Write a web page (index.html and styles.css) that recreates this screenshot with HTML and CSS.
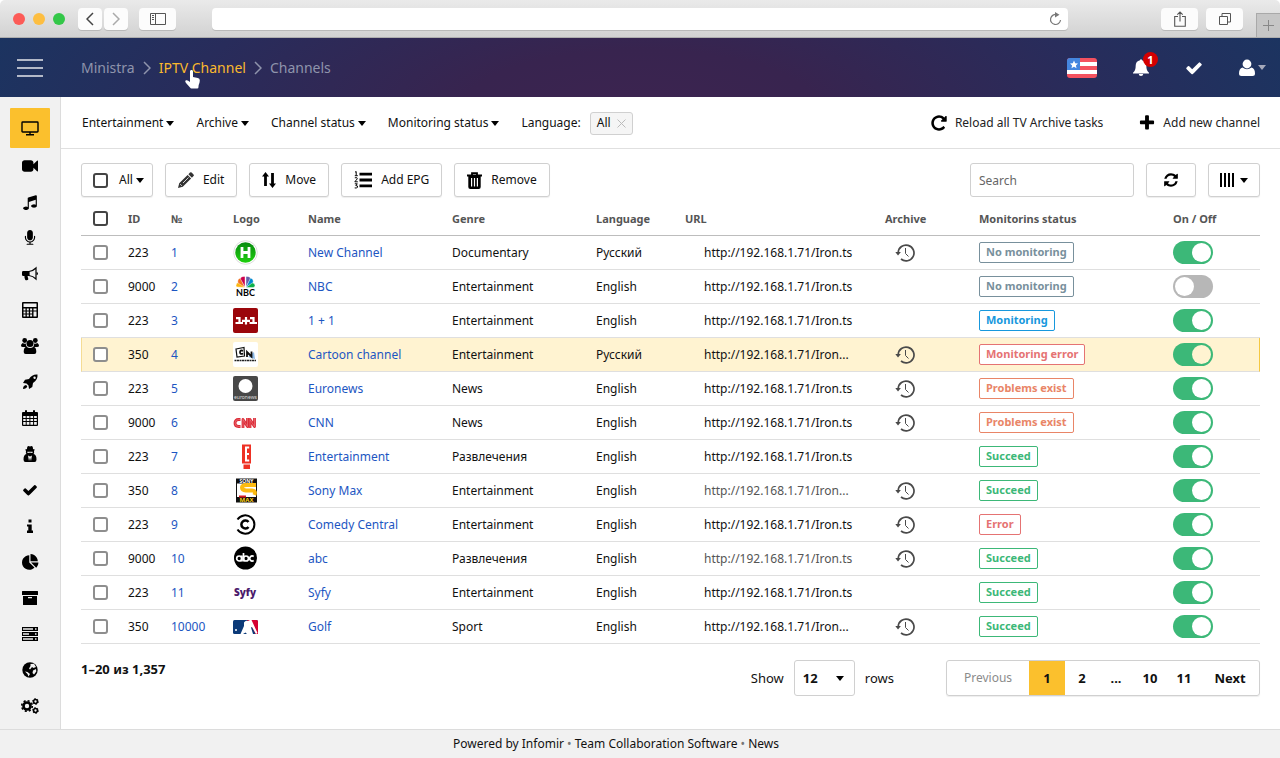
FILE: index.html
```html
<!DOCTYPE html>
<html lang="en">
<head>
    <meta charset="UTF-8">
    <meta name="viewport" content="width=device-width, initial-scale=1.0">
    <title>Ministra - IPTV Channels</title>
    <link rel="stylesheet" href="styles.css">
</head>
<body>
    <svg class="sprite" aria-hidden="true">
        <symbol id="check" viewBox="0 0 1792 1792"><path d="M1671 566q0 40-28 68l-724 724-136 136q-28 28-68 28t-68-28l-136-136-362-362q-28-28-28-68t28-68l136-136q28-28 68-28t68 28l294 295 656-657q28-28 68-28t68 28l136 136q28 28 28 68z"/></symbol>
        <symbol id="caret" viewBox="0 0 8 5"><path d="M0 0h8L4 5z"/></symbol>
        <symbol id="chevron" viewBox="0 0 8 14"><path d="M1 1l6 6-6 6" fill="none" stroke="currentColor" stroke-width="1.5"/></symbol>
        <symbol id="history" viewBox="0 0 20 20"><path d="M3.200 9.500A7.900 7.900 0 1 1 6 16" fill="none" stroke="currentColor" stroke-width="1.700"/><path d="M.3 9h5.600L3 12.500z"/><path d="M10.500 5v5.500l3 3" fill="none" stroke="currentColor"/></symbol>
    </svg>

    <!-- browser bar -->
    <div class="browser">
        <div class="lights"><i class="red"></i><i class="yellow"></i><i class="green"></i></div>
        <div class="nav">
            <button class="chrome-btn small" aria-label="Back"><svg width="8" height="14" viewBox="0 0 8 14"><path d="M7 1L1 7l6 6" fill="none" stroke="#444" stroke-width="1.500"/></svg></button>
            <button class="chrome-btn small" aria-label="Forward"><svg width="8" height="14" viewBox="0 0 8 14"><path d="M1 1l6 6-6 6" fill="none" stroke="#aaa" stroke-width="1.500"/></svg></button>
        </div>
        <button class="chrome-btn" aria-label="Sidebar"><svg width="16" height="12" viewBox="0 0 16 12"><path d="M.5.5h15v11H.5zM5.500.5v11M2 2.500h2M2 4.500h2M2 6.500h2" fill="none" stroke="#555"/></svg></button>
        <div class="address">
            <input type="text" aria-label="Address">
            <svg width="13" height="14" viewBox="0 0 13 14"><path d="M8 2.700A5 5 0 1 0 11.500 8" fill="none" stroke="#777" stroke-width="1.200"/><path d="M6 0l4.500 2.800L6 5.500z" fill="#777"/></svg>
        </div>
        <div class="window-btns">
            <button class="chrome-btn" aria-label="Share"><svg width="12" height="16" viewBox="0 0 12 16"><path d="M4 5.500H.7v9.800h10.600V5.500H8M6 10.500V1.200M3.300 3.700L6 1l2.700 2.700" fill="none" stroke="#555" stroke-width="1.100"/></svg></button>
            <button class="chrome-btn" aria-label="Tabs"><svg width="12" height="12" viewBox="0 0 12 12"><path d="M.5 3.500h8v8h-8zM3 3.500v-3h8.500v8.500h-3" fill="none" stroke="#555"/></svg></button>
        </div>
        <button class="new-tab" aria-label="New tab"><svg width="11" height="11" viewBox="0 0 11 11"><path d="M5.500 0v11M0 5.500h11" stroke="#888"/></svg></button>
    </div>

    <header class="header">
        <button class="burger" aria-label="Menu"><span></span><span></span><span></span></button>
        <nav class="breadcrumbs">
            <a href="#">Ministra</a>
            <svg class="chevron"><use href="#chevron"/></svg>
            <a href="#" class="current">IPTV Channel<svg class="cursor" width="15" height="19" viewBox="0 0 15 19"><path fill="#fff" d="M5 1.500C5 .5 5.600 0 6.500 0S8 .5 8 1.500V7l4.800 1q2 .4 2 2.300c0 3-1.300 4-1.300 6V17q0 1.500-1.300 1.500H6.500q-1 0-1.500-1L1 13Q-.5 11 1 10.300T5 12z"/></svg></a>
            <svg class="chevron"><use href="#chevron"/></svg>
            <span>Channels</span>
        </nav>
        <div class="header-tools">
            <button aria-label="Country"><svg width="30" height="20" viewBox="0 0 30 20"><clipPath id="fc"><rect width="30" height="20" rx="3"/></clipPath><g clip-path="url(#fc)"><path fill="#f4515f" d="M0 0h30v20H0z"/><path fill="#fff" d="M13 4h17v4H13zM0 12h30v4H0z"/><path fill="#4486df" d="M0 0h13v12H0z"/><path fill="#fff" d="M7 2.500l1.200 2.700 2.800.3-2.100 1.900.6 2.900L7 8.800l-2.500 1.500.6-2.900L3 5.500l2.800-.3z"/></g></svg></button>
            <button class="bell" aria-label="Notifications"><svg width="16" height="17" viewBox="0 0 16 17"><path d="M7 1.200a1 1 0 0 1 2 0c2.800.5 4.300 2.600 4.300 5.300 0 4 .9 5.700 2.700 7.300v.7H0v-.7c1.800-1.600 2.700-3.300 2.700-7.300C2.700 3.800 4.200 1.700 7 1.200zM5.800 15h4.400a2.200 2 0 0 1-4.400 0z"/></svg><span class="count">1</span></button>
            <button aria-label="Tasks"><svg width="18" height="18"><use href="#check"/></svg></button>
            <button class="user" aria-label="Account"><svg width="16" height="18" viewBox="0 0 16 18"><circle cx="8" cy="5" r="4.400"/><path d="M3.500 8.500Q8 12 12.500 8.500 16 9.500 16 14.500q0 2.500-2.500 2.500h-11Q0 17 0 14.500 0 9.500 3.500 8.500z"/></svg><svg class="caret"><use href="#caret"/></svg></button>
        </div>
    </header>

    <div class="layout">
        <nav class="sidebar">
            <a href="#" class="active" aria-label="TV"><svg width="18" height="18" viewBox="0 0 18 18"><path d="M1.700 3h14.600q.7 0 .7.7v8.600q0 .7-.7.7H1.700q-.7 0-.7-.7V3.700q0-.7.7-.7zM9 13v2.500M5 15.700h8" fill="none" stroke="#000" stroke-width="1.400"/></svg></a>
            <a href="#" aria-label="Video"><svg width="16" height="16" viewBox="0 0 1792 1792"><path d="M1792 352v1088q0 42-39 59-13 5-25 5-27 0-45-19l-403-403v166q0 119-84.500 203.500t-203.500 84.500h-704q-119 0-203.500-84.500t-84.500-203.500v-704q0-119 84.500-203.500t203.500-84.500h704q119 0 203.500 84.500t84.500 203.500v165l403-402q18-19 45-19 12 0 25 5 39 17 39 59z"/></svg></a>
            <a href="#" aria-label="Music"><svg width="16" height="16" viewBox="0 0 1792 1792"><path d="M1664 224v1120q0 50-34 89t-86 60.500-103.500 32-96.500 10.500-96.500-10.500-103.500-32-86-60.500-34-89 34-89 86-60.500 103.500-32 96.500-10.500q105 0 192 39v-537l-768 237v709q0 50-34 89t-86 60.500-103.500 32-96.500 10.500-96.500-10.500-103.500-32-86-60.500-34-89 34-89 86-60.500 103.500-32 96.500-10.500q105 0 192 39v-967q0-31 19-56.500t49-35.500l832-256q12-4 28-4 40 0 68 28t28 68z"/></svg></a>
            <a href="#" aria-label="Karaoke"><svg width="16" height="16" viewBox="0 0 1792 1792"><path d="M1472 704v128q0 221-147.500 384.500t-364.500 187.500v132h256q26 0 45 19t19 45-19 45-45 19h-640q-26 0-45-19t-19-45 19-45 45-19h256v-132q-217-24-364.500-187.500t-147.500-384.500v-128q0-26 19-45t45-19 45 19 19 45v128q0 185 131.500 316.500t316.500 131.500 316.500-131.500 131.500-316.500v-128q0-26 19-45t45-19 45 19 19 45zm-256-384v512q0 132-94 226t-226 94-226-94-94-226v-512q0-132 94-226t226-94 226 94 94 226z"/></svg></a>
            <a href="#" aria-label="Promo"><svg width="16" height="16" viewBox="0 0 16 16"><path d="M1.200 5H7v5H5.600c0 1.600 1 2.400.6 3.600-.5 1-2.600.9-3 .1C2.500 12 2.300 11 2.500 10H1.200Q0 10 0 8.800V6.200Q0 5 1.200 5z"/><path d="M7 5.500Q11 5 14 2v11q-3-3-7-3.500z" fill="none" stroke="#000" stroke-width="1.200"/><path d="M14.500 6q1.500 0 1.500 1.500T14.500 9z"/></svg></a>
            <a href="#" aria-label="Calculator"><svg width="16" height="16" viewBox="0 0 16 16"><path fill-rule="evenodd" d="M1 0h14q1 0 1 1v14q0 1-1 1H1q-1 0-1-1V1q0-1 1-1zm.5 1.500V5h13V1.500zm0 5v2h2v-2zm3.300 0v2h2v-2zm3.300 0v2h2v-2zm3.400 0v2h3v-2zm-10 3v2h2v-2zm3.300 0v2h2v-2zm3.300 0v2h2v-2zM1.500 12.500v2h2v-2zm3.300 0v2h2v-2zm3.300 0v2h2v-2zm3.400-3v5h3v-5z"/></svg></a>
            <a href="#" aria-label="Users"><svg width="18" height="16" viewBox="0 0 18 16"><circle cx="3.700" cy="2.500" r="2.400"/><circle cx="14.300" cy="2.500" r="2.400"/><circle cx="9" cy="5.500" r="3.500"/><path d="M1.700 5q1.500 1 3 .5.2 2 1.300 3.500H2Q0 9 0 7.500T1.700 5zM16.300 5q-1.500 1-3 .5-.2 2-1.300 3.500h4q2 0 2-1.500T16.300 5zM5.500 8.800Q9 11.200 12.500 8.800 15.300 9 15.300 14q0 2-2 2H4.700q-2 0-2-2 0-5 2.800-5.200z"/></svg></a>
            <a href="#" aria-label="Launch"><svg width="16" height="16" viewBox="0 0 16 16"><path fill-rule="evenodd" d="M15.500.5Q16 6 11 9l-.7 4L7 15l-.5-3.500L4.500 9.500 1 9l2-3.300L7 5Q10 0 15.500.5zM12.500 2.500a1.200 1.200 0 1 0 .1 2.400 1.200 1.200 0 0 0-.1-2.400zM4 11l1.300 1.300Q4.500 15 1 15q0-3.500 3-4z"/></svg></a>
            <a href="#" aria-label="Calendar"><svg width="16" height="16" viewBox="0 0 16 16"><path fill-rule="evenodd" d="M1 2h2V1q0-1 1-1t1 1v1h6V1q0-1 1-1t1 1v1h2q1 0 1 1v12q0 1-1 1H1q-1 0-1-1V3q0-1 1-1zm.2 4v2h2.500V6zm3.500 0v2h2.700V6zm3.700 0v2h2.700V6zm3.700 0v2h2.700V6zM1.200 9v2h2.500V9zm3.500 0v2h2.700V9zm3.700 0v2h2.700V9zm3.700 0v2h2.700V9zM1.200 12v2.700h2.500V12zm3.500 0v2.700h2.700V12zm3.700 0v2.700h2.700V12zm3.700 0v2.700h2.700V12z"/></svg></a>
            <a href="#" aria-label="Agent"><svg width="14" height="16" viewBox="0 0 14 16"><path fill-rule="evenodd" d="M4 3q0-3 1.500-3L7 .6 8.500 0Q10 0 10 3l2 .8-1 1q.5 2.700-.5 3.200Q13.500 8.500 13.500 13.500q0 2.500-2 2.500h-9q-2 0-2-2.500Q.5 8.500 3.500 8q-1-.5-.5-3.200l-1-1zm.3 2.700v1l2 .3.700-.7.700.7 2-.3v-1zM5 9.500L6 15l1-3.500L8 15l1-5.500-2 1z"/></svg></a>
            <a href="#" aria-label="Tasks"><svg width="16" height="16"><use href="#check"/></svg></a>
            <a href="#" aria-label="Info"><svg width="8" height="14" viewBox="0 0 8 14"><path d="M2.500.5h3v3h-3zM1 5.500h4.700v6H7V14H1v-2.500h1.300v-4H1z"/></svg></a>
            <a href="#" aria-label="Statistics"><svg width="17" height="17" viewBox="0 0 1792 1792"><path d="M768 890l546 546q-106 108-247.500 168t-298.500 60q-209 0-385.500-103t-279.500-279.500-103-385.500 103-385.500 279.500-279.500 385.500-103v762zm187 6h773q0 157-60 298.500t-168 247.500zm709-128h-768v-768q209 0 385.500 103t279.500 279.500 103 385.500z"/></svg></a>
            <a href="#" aria-label="Storage"><svg width="16" height="14" viewBox="0 0 16 14"><path fill-rule="evenodd" d="M.5 0h15q.5 0 .5.500V4H0V.5Q0 0 .5 0zM1 5h14v8.500q0 .5-.5.5h-13q-.5 0-.5-.5zM6 6v1.200h4V6z"/></svg></a>
            <a href="#" aria-label="Servers"><svg width="16" height="14" viewBox="0 0 16 14"><path fill-rule="evenodd" d="M0 0h16v4H0zM0 5h16v4H0zM0 10h16v4H0zM1 1.300v1.400h10V1.300zM1 6.300v1.400h6V6.300zM1 11.300v1.400h10v-1.400zM13 1.300v1.400h1.500V1.300zM13 6.300v1.400h1.500V6.300zM13 11.300v1.400h1.500v-1.400z"/></svg></a>
            <a href="#" aria-label="World"><svg width="16" height="16" viewBox="0 0 16 16"><circle cx="8" cy="8" r="7.700"/><path fill="#f1f1f1" d="M8.500 2l3.500-.2 2 3.200-2.500 1L10 5 8 7.500l-1-1L8.500 4zM3 9.500l2.500.5L8 12l-1.500 2.500L5.500 12zM11 8.500l3-1.500.3 2.500-2.300 3-1.500-1.500z"/></svg></a>
            <a href="#" aria-label="Settings"><svg width="18" height="16" viewBox="0 0 18 16"><circle cx="6" cy="8" r="3.500" fill="none" stroke="#000" stroke-width="2.600"/><circle cx="6" cy="8" r="5.300" fill="none" stroke="#000" stroke-width="1.600" stroke-dasharray="2.080 2.080"/><g fill="none" stroke="#000"><circle cx="14.500" cy="3.500" r="1.900" stroke-width="1.500"/><circle cx="14.500" cy="3.500" r="2.900" stroke-dasharray="1.500 1.500"/><circle cx="14.500" cy="12.500" r="1.900" stroke-width="1.500"/><circle cx="14.500" cy="12.500" r="2.900" stroke-dasharray="1.500 1.500"/></g></svg></a>
        </nav>

        <main class="main">
            <div class="filters">
                <button>Entertainment <svg class="caret"><use href="#caret"/></svg></button>
                <button>Archive <svg class="caret"><use href="#caret"/></svg></button>
                <button>Channel status <svg class="caret"><use href="#caret"/></svg></button>
                <button>Monitoring status <svg class="caret"><use href="#caret"/></svg></button>
                <div class="language">Language: <button class="chip">All <svg width="9" height="9" viewBox="0 0 9 9"><path d="M.5.5l8 8M8.500.5l-8 8" stroke="#bbb"/></svg></button></div>
                <div class="actions">
                    <button><svg width="18" height="18" viewBox="0 0 1792 1792"><path d="M1664 256v448q0 26-19 45t-45 19h-448q-42 0-59-40-17-39 14-69l138-138q-148-137-349-137-104 0-198.500 40.500t-163.500 109.500-109.500 163.500-40.500 198.500 40.500 198.500 109.500 163.500 163.500 109.500 198.500 40.500q119 0 225-52t179-147q7-10 23-12 15 0 25 9l137 138q9 8 9.500 20.500t-7.500 22.500q-109 132-264 204.500t-327 72.500q-156 0-298-61t-245-164-164-245-61-298 61-298 164-245 245-164 298-61q147 0 284.500 55.500t244.500 156.500l130-129q29-31 70-14 39 17 39 59z"/></svg>Reload all TV Archive tasks</button>
                    <button><svg width="18" height="18" viewBox="0 0 1792 1792"><path d="M1600 736v192q0 40-28 68t-68 28h-416v416q0 40-28 68t-68 28h-192q-40 0-68-28t-28-68v-416h-416q-40 0-68-28t-28-68v-192q0-40 28-68t68-28h416v-416q0-40 28-68t68-28h192q40 0 68 28t28 68v416h416q40 0 68 28t28 68z"/></svg>Add new channel</button>
                </div>
            </div>

            <div class="content">
                <div class="toolbar">
                    <div class="btn select-all"><input type="checkbox" class="box dark" aria-label="Select all"><button>All <svg class="caret"><use href="#caret"/></svg></button></div>
                    <button class="btn"><svg width="16" height="16" viewBox="0 0 16 16" fill="#333"><path d="M12 .6q.8-.8 1.600 0l1.900 1.900q.8.800 0 1.600l-1.600 1.600-3.500-3.500zM9.600 3l3.500 3.500-8.300 8.300L0 16l1.200-4.700z"/><path d="M2.200 12.200l1.600 1.600M5 11l5.500-5.500" stroke="#fff" stroke-width=".8"/></svg>Edit</button>
                    <button class="btn"><svg width="14" height="16" viewBox="0 0 14 16"><path d="M3.500 0L7 4.500H4.900V14H2.100V4.500H0zM10.500 16L14 11.500h-2.100V1H9.100v10.500H7z"/></svg>Move</button>
                    <button class="btn"><svg width="18" height="18" viewBox="0 0 18 18"><path d="M5.500 3.200H18M5.500 9H18M5.500 14.800H18" stroke="#000" stroke-width="2.800"/><path d="M1 1.200L2.200.5v4M.8 4.700h3M.8 6.800Q3.500 6 3.300 7.800L.8 10.800h3M.8 12.800h2.500L1.800 14.600q2-.2 1.800 1.400-.5 1.600-2.900.9" fill="none" stroke="#000"/></svg>Add EPG</button>
                    <button class="btn"><svg width="15" height="17" viewBox="0 0 15 17"><path d="M0 3.500h15M5 3V1.200h5V3" fill="none" stroke="#000" stroke-width="1.800"/><path fill-rule="evenodd" d="M1.300 4h12.400v11q0 2-2 2H3.300q-2 0-2-2zM4 6v8.500h1.200V6zm2.900 0v8.500h1.200V6zm2.900 0v8.500H11V6z"/></svg>Remove</button>
                    <input type="search" class="search" placeholder="Search" aria-label="Search">
                    <button class="btn icon-only" aria-label="Refresh"><svg width="16" height="16" viewBox="0 0 1792 1792"><path d="M1639 1056q0 5-1 7-64 268-268 434.500t-478 166.500q-146 0-282.500-55t-243.500-157l-129 129q-19 19-45 19t-45-19-19-45v-448q0-26 19-45t45-19h448q26 0 45 19t19 45-19 45l-137 137q71 66 161 102t187 36q134 0 250-65t186-179q11-17 53-117 8-23 30-23h192q13 0 22.500 9.500t9.500 22.500zm25-800v448q0 26-19 45t-45 19h-448q-26 0-45-19t-19-45 19-45l138-138q-148-137-349-137-134 0-250 65t-186 179q-11 17-53 117-8 23-30 23h-199q-13 0-22.500-9.500t-9.500-22.500v-7q65-268 270-434.500t480-166.500q146 0 284 55.500t245 156.500l130-129q19-19 45-19t45 19 19 45z"/></svg></button>
                    <button class="btn icon-only columns" aria-label="Columns"><svg width="14" height="14" viewBox="0 0 14 14"><path d="M1 0v14M5 0v14M9 0v14M13 0v14" stroke="#000" stroke-width="2"/></svg><svg class="caret"><use href="#caret"/></svg></button>
                </div>

                <table class="channels">
                    <colgroup>
                        <col class="c-check"><col class="c-id"><col class="c-num"><col class="c-logo"><col class="c-name"><col class="c-genre"><col class="c-lang"><col class="c-url"><col class="c-archive"><col class="c-status"><col class="c-toggle">
                    </colgroup>
                    <thead>
                        <tr>
                            <th><input type="checkbox" class="box dark" aria-label="Select page"></th>
                            <th>ID</th><th>№</th><th>Logo</th><th>Name</th><th>Genre</th><th>Language</th><th>URL</th><th>Archive</th><th>Monitorins status</th><th>On / Off</th>
                        </tr>
                    </thead>
                    <tbody>
                        <tr>
                            <td><input type="checkbox" class="box" aria-label="Select New Channel"></td>
                            <td>223</td><td><a href="#">1</a></td>
                            <td><svg class="logo" viewBox="0 0 25 25"><defs><linearGradient id="gr" x2="0" y2="1"><stop stop-color="#078a10"/><stop offset="1" stop-color="#1fd00e"/></linearGradient></defs><circle cx="12.500" cy="12.500" r="11.800" fill="#fff" stroke="#ddd"/><circle cx="12.500" cy="12.500" r="10.200" fill="url(#gr)"/><path d="M9 7v11M16 7v11M9 12.500h7" stroke="#fff" stroke-width="2.800"/></svg></td>
                            <td><a href="#">New Channel</a></td><td>Documentary</td><td>Русский</td><td class="url">http://192.168.1.71/Iron.ts</td>
                            <td class="archive"><svg><use href="#history"/></svg></td>
                            <td><span class="badge none">No monitoring</span></td>
                            <td><input type="checkbox" class="toggle" checked aria-label="New Channel on"></td>
                        </tr>
                        <tr>
                            <td><input type="checkbox" class="box" aria-label="Select NBC"></td>
                            <td>9000</td><td><a href="#">2</a></td>
                            <td><svg class="logo" viewBox="0 0 25 25"><g stroke="#fff" stroke-width=".4"><path fill="#fcb711" d="M12 13.500L4 13q-2-1 0-4 2-1 3 0z"/><path fill="#f37021" d="M12 13.500L5 9q-1-4 2.500-5z"/><path fill="#cc004c" d="M12 13L7.500 5q0-3 4.500-2.500z"/><path fill="#6460aa" d="M13 13V2.500q4.500-.5 4.500 2.500z"/><path fill="#0089d0" d="M13 13.500l4.500-9.500Q21 5 20 9z"/><path fill="#0db14b" d="M13 13.500L19 9q3-.5 3 2.500 0 2-2 2z"/></g><text x="12.500" y="22" font-size="9" font-weight="bold" font-family="Lato" text-anchor="middle">NBC</text></svg></td>
                            <td><a href="#">NBC</a></td><td>Entertainment</td><td>English</td><td class="url">http://192.168.1.71/Iron.ts</td>
                            <td class="archive"></td>
                            <td><span class="badge none">No monitoring</span></td>
                            <td><input type="checkbox" class="toggle" aria-label="NBC on"></td>
                        </tr>
                        <tr>
                            <td><input type="checkbox" class="box" aria-label="Select 1 + 1"></td>
                            <td>223</td><td><a href="#">3</a></td>
                            <td><svg class="logo" viewBox="0 0 25 25"><rect width="25" height="25" rx="2" fill="#9b060b"/><path d="M3 10.200h3.500v5M2.500 15h7.500M17 10.200h3.500v5M16.500 15H24M9 12.800h8M13 9v7.500" fill="none" stroke="#fff" stroke-width="2.200"/></svg></td>
                            <td><a href="#">1 + 1</a></td><td>Entertainment</td><td>English</td><td class="url">http://192.168.1.71/Iron.ts</td>
                            <td class="archive"></td>
                            <td><span class="badge monitoring">Monitoring</span></td>
                            <td><input type="checkbox" class="toggle" checked aria-label="1 + 1 on"></td>
                        </tr>
                        <tr class="selected">
                            <td><input type="checkbox" class="box" aria-label="Select Cartoon channel"></td>
                            <td>350</td><td><a href="#">4</a></td>
                            <td><svg class="logo" viewBox="0 0 25 25"><rect width="25" height="25" rx="2" fill="#fff"/><path fill="#8db9e6" d="M15 15l6-5 1 7z"/><path d="M3 7l8-1.500.5 8.500L4 15z" fill="none" stroke="#111" stroke-width="1.200"/><path d="M10 8.800q-3-1-3 1.500t3.200 1.200M14 15v-5l4.500 4.500V9.500" fill="none" stroke="#111" stroke-width="1.800"/><path d="M1.500 18.500h21.500" stroke="#222" stroke-width="1.300" stroke-dasharray="2 .5"/></svg></td>
                            <td><a href="#">Cartoon channel</a></td><td>Entertainment</td><td>Русский</td><td class="url">http://192.168.1.71/Iron...</td>
                            <td class="archive"><svg><use href="#history"/></svg></td>
                            <td><span class="badge error">Monitoring error</span></td>
                            <td><input type="checkbox" class="toggle" checked aria-label="Cartoon channel on"></td>
                        </tr>
                        <tr>
                            <td><input type="checkbox" class="box" aria-label="Select Euronews"></td>
                            <td>223</td><td><a href="#">5</a></td>
                            <td><svg class="logo" viewBox="0 0 25 25"><rect width="25" height="25" rx="2" fill="#484848"/><circle cx="12.500" cy="10" r="7" fill="#fff"/><text x="12.500" y="22.500" font-size="5" fill="#ddd" text-anchor="middle">euronews</text></svg></td>
                            <td><a href="#">Euronews</a></td><td>News</td><td>English</td><td class="url">http://192.168.1.71/Iron.ts</td>
                            <td class="archive"><svg><use href="#history"/></svg></td>
                            <td><span class="badge problems">Problems exist</span></td>
                            <td><input type="checkbox" class="toggle" checked aria-label="Euronews on"></td>
                        </tr>
                        <tr>
                            <td><input type="checkbox" class="box" aria-label="Select CNN"></td>
                            <td>9000</td><td><a href="#">6</a></td>
                            <td><svg class="logo" viewBox="0 0 25 25"><g fill="none" stroke-linejoin="round"><path id="cnn" d="M7.500 9.500H5.500Q2 9.500 2 13t3.500 3.500h2M10 18V9.500l4.500 7V8M17 18V9.500l4.500 7V8" stroke="#dc2b36" stroke-width="2.800"/><path d="M7.500 9.500H5.500Q2 9.500 2 13t3.500 3.500h2M10 18V9.500l4.500 7V8M17 18V9.500l4.500 7V8" stroke="#f3a9ad" stroke-width=".4"/></g></svg></td>
                            <td><a href="#">CNN</a></td><td>News</td><td>English</td><td class="url">http://192.168.1.71/Iron.ts</td>
                            <td class="archive"><svg><use href="#history"/></svg></td>
                            <td><span class="badge problems">Problems exist</span></td>
                            <td><input type="checkbox" class="toggle" checked aria-label="CNN on"></td>
                        </tr>
                        <tr>
                            <td><input type="checkbox" class="box" aria-label="Select Entertainment"></td>
                            <td>223</td><td><a href="#">7</a></td>
                            <td><svg class="logo" viewBox="0 0 25 25"><path fill="#ee3124" d="M9 .5h9v19H9zM10.500 20.500h6.500v4.500h-6.500z"/><path d="M16.200 3.500h-3.200v13h3.200M13 10h3" fill="none" stroke="#fff" stroke-width="2"/></svg></td>
                            <td><a href="#">Entertainment</a></td><td>Развлечения</td><td>English</td><td class="url">http://192.168.1.71/Iron.ts</td>
                            <td class="archive"></td>
                            <td><span class="badge succeed">Succeed</span></td>
                            <td><input type="checkbox" class="toggle" checked aria-label="Entertainment on"></td>
                        </tr>
                        <tr>
                            <td><input type="checkbox" class="box" aria-label="Select Sony Max"></td>
                            <td>350</td><td><a href="#">8</a></td>
                            <td><svg class="logo" viewBox="0 0 25 25"><path fill="#111" d="M3 .5h21v24H3z"/><path fill="#fff" d="M4 5.500h19V19H4z"/><path d="M23 7h-9q-5 0-5 2.500t4 3h6q4 0 2.500 4.500" fill="none" stroke="#fdbb11" stroke-width="4"/><path fill="#d71920" d="M6 17.500h7v2H6z"/><text x="13.500" y="5" font-size="5" font-weight="bold" fill="#fff" text-anchor="middle">SONY</text><text x="13.500" y="24" font-size="6" font-weight="bold" fill="#fdd017" text-anchor="middle">MAX</text></svg></td>
                            <td><a href="#">Sony Max</a></td><td>Entertainment</td><td>English</td><td class="url muted">http://192.168.1.71/Iron...</td>
                            <td class="archive"><svg><use href="#history"/></svg></td>
                            <td><span class="badge succeed">Succeed</span></td>
                            <td><input type="checkbox" class="toggle" checked aria-label="Sony Max on"></td>
                        </tr>
                        <tr>
                            <td><input type="checkbox" class="box" aria-label="Select Comedy Central"></td>
                            <td>223</td><td><a href="#">9</a></td>
                            <td><svg class="logo" viewBox="0 0 25 25"><g fill="none" stroke="#000"><path d="M4.500 7.500a9.200 9.200 0 1 1 0 10" stroke-width="2"/><path d="M15.500 10a4 4 0 1 0 0 5" stroke-width="2.500"/></g></svg></td>
                            <td><a href="#">Comedy Central</a></td><td>Entertainment</td><td>English</td><td class="url">http://192.168.1.71/Iron.ts</td>
                            <td class="archive"><svg><use href="#history"/></svg></td>
                            <td><span class="badge error">Error</span></td>
                            <td><input type="checkbox" class="toggle" checked aria-label="Comedy Central on"></td>
                        </tr>
                        <tr>
                            <td><input type="checkbox" class="box" aria-label="Select abc"></td>
                            <td>9000</td><td><a href="#">10</a></td>
                            <td><svg class="logo" viewBox="0 0 25 25"><circle cx="12.500" cy="12" r="11.500"/><g fill="none" stroke="#fff" stroke-width="1.700"><circle cx="6.200" cy="12.500" r="2.500"/><path d="M8.700 9.500v6M10.500 7v8.500M20.700 10.500a2.500 2.500 0 1 0 0 4"/><circle cx="13" cy="12.500" r="2.500"/></g></svg></td>
                            <td><a href="#">abc</a></td><td>Развлечения</td><td>English</td><td class="url muted">http://192.168.1.71/Iron.ts</td>
                            <td class="archive"><svg><use href="#history"/></svg></td>
                            <td><span class="badge succeed">Succeed</span></td>
                            <td><input type="checkbox" class="toggle" checked aria-label="abc on"></td>
                        </tr>
                        <tr>
                            <td><input type="checkbox" class="box" aria-label="Select Syfy"></td>
                            <td>223</td><td><a href="#">11</a></td>
                            <td><svg class="logo" viewBox="0 0 25 25"><text x="12" y="16" font-size="10" font-weight="900" fill="#4b1a6b" text-anchor="middle">Syfy</text></svg></td>
                            <td><a href="#">Syfy</a></td><td>Entertainment</td><td>English</td><td class="url">http://192.168.1.71/Iron.ts</td>
                            <td class="archive"></td>
                            <td><span class="badge succeed">Succeed</span></td>
                            <td><input type="checkbox" class="toggle" checked aria-label="Syfy on"></td>
                        </tr>
                        <tr>
                            <td><input type="checkbox" class="box" aria-label="Select Golf"></td>
                            <td>350</td><td><a href="#">10000</a></td>
                            <td><svg class="logo" viewBox="0 0 25 25"><rect y="6" width="25" height="14" rx="1.500" fill="#0b3a78"/><path fill="#d50032" d="M14 6h9.500q1.500 0 1.500 1.500V20h-2.500L19 13z"/><path fill="#fff" d="M11 8.500q1.500-2.500 4-1.500l2-1h1.500l6 13-1.500 1-4-7-1 .5L20 20h-6l-1.500-1.500L10 20H7.500L11 12z"/><circle cx="3" cy="16" r="1" fill="#fff"/></svg></td>
                            <td><a href="#">Golf</a></td><td>Sport</td><td>English</td><td class="url">http://192.168.1.71/Iron...</td>
                            <td class="archive"><svg><use href="#history"/></svg></td>
                            <td><span class="badge succeed">Succeed</span></td>
                            <td><input type="checkbox" class="toggle" checked aria-label="Golf on"></td>
                        </tr>
                    </tbody>
                </table>

                <div class="bottom">
                    <strong class="total">1–20 из 1,357</strong>
                    <div class="rows">
                        <label for="rows">Show</label>
                        <div class="select">
                            <select id="rows"><option>12</option><option>24</option></select>
                            <svg class="caret"><use href="#caret"/></svg>
                        </div>
                        <span>rows</span>
                    </div>
                    <nav class="pager">
                        <a href="#" class="prev">Previous</a>
                        <a href="#" class="active">1</a>
                        <a href="#">2</a>
                        <span>...</span>
                        <a href="#">10</a>
                        <a href="#">11</a>
                        <a href="#" class="next">Next</a>
                    </nav>
                </div>
            </div>
        </main>
    </div>

    <footer class="footer">Powered by <a href="#">Infomir</a> <i>•</i> <a href="#">Team Collaboration Software</a> <i>•</i> <a href="#">News</a></footer>
</body>
</html>
```

FILE: styles.css
```css
*{
    box-sizing: border-box;
}
body{
    margin: 0;
    min-height: 100vh;
    display: flex;
    flex-direction: column;
    font-family: "Noto Sans", sans-serif;
    font-size: 12px;
    line-height: 16px;
    color: #111;
    background: #fff;
}
button,
input,
select{
    font: inherit;
    color: inherit;
    margin: 0;
}
button{
    display: flex;
    align-items: center;
    padding: 0;
    border: 0;
    background: none;
    white-space: nowrap;
    cursor: pointer;
}
a{
    color: inherit;
    text-decoration: none;
}
svg{
    display: block;
    flex-shrink: 0;
}
.sprite{
    position: absolute;
    width: 0;
    height: 0;
}
.caret{
    width: 8px;
    height: 5px;
}

/* browser bar */
.browser{
    display: flex;
    align-items: center;
    height: 38px;
    padding-left: 13px;
    border-bottom: 1px solid #aeaeae;
    border-radius: 5px 5px 0 0;
    background: linear-gradient(#eaeaea, #d2d2d2);
}
.lights{
    display: flex;
    gap: 8px;
    margin-right: 13px;
}
.lights i{
    width: 12px;
    height: 12px;
    border-radius: 50%;
}
.red{
    background: #fc5b57;
}
.yellow{
    background: #fdbe41;
}
.green{
    background: #33c748;
}
.nav{
    display: flex;
    gap: 2px;
    margin-right: 11px;
}
.chrome-btn{
    width: 37px;
    height: 22px;
    justify-content: center;
    border-radius: 4px;
    background: #fcfcfc;
    box-shadow: 0 1px 0 #b9b9b9;
}
.chrome-btn.small{
    width: 24px;
}
.address{
    flex: 1;
    display: flex;
    align-items: center;
    height: 22px;
    margin: 0 93px 0 36px;
    padding-right: 6px;
    border-radius: 4px;
    background: #fff;
    box-shadow: 0 1px 0 #b9b9b9;
}
.address input{
    flex: 1;
    border: 0;
    outline: 0;
    background: none;
}
.window-btns{
    display: flex;
    gap: 8px;
    margin-right: 13px;
}
.new-tab{
    align-self: flex-end;
    width: 24px;
    height: 24px;
    justify-content: center;
    border: 1px solid #a9a9a9;
    border-width: 1px 0 0 1px;
    background: #c6c6c6;
}

/* header */
.header{
    display: flex;
    align-items: center;
    height: 59px;
    padding: 0 14px 0 17px;
    color: #fff;
    background: radial-gradient(ellipse 55% 400% at 50% 120%, #3c2450 0%, #38244f 25%, #282c5b 65%, #1a3561 100%);
}
.burger{
    flex-direction: column;
    gap: 6px;
    margin-right: 38px;
}
.burger span{
    width: 26px;
    height: 2px;
    background: #b3b9c8;
}
.breadcrumbs{
    display: flex;
    align-items: center;
    gap: 8px;
    font-size: 14px;
    line-height: 20px;
    color: #8f94ac;
}
.breadcrumbs .current{
    position: relative;
    color: #fbb92d;
}
.chevron{
    width: 8px;
    height: 14px;
}
.cursor{
    position: absolute;
    top: 12px;
    left: 26px;
}
.header-tools{
    display: flex;
    align-items: center;
    gap: 36px;
    margin-left: auto;
}
.header-tools svg{
    fill: #fff;
}
.header-tools .caret{
    fill: #a5a9bb;
}
.bell{
    position: relative;
}
.count{
    position: absolute;
    top: -7px;
    left: 10px;
    width: 15px;
    height: 15px;
    border-radius: 50%;
    background: #d40000;
    font-size: 11px;
    font-weight: bold;
    line-height: 15px;
}
.user{
    gap: 3px;
}

/* layout */
.layout{
    flex: 1;
    display: flex;
}
.sidebar{
    width: 61px;
    padding: 11px 10px 4px;
    border-right: 1px solid #dcdcdc;
    background: #f1f1f1;
}
.sidebar a{
    display: flex;
    align-items: center;
    justify-content: center;
    width: 40px;
    height: 36px;
}
.sidebar .active{
    height: 40px;
    border-radius: 1px;
    background: #fbc02d;
}
.main{
    flex: 1;
    min-width: 0;
}

/* filters */
.filters{
    display: flex;
    align-items: center;
    gap: 22px;
    height: 52px;
    padding: 1px 20px 0 21px;
    border-bottom: 1px solid #e0e0e0;
}
.filters button{
    gap: 3px;
}
.language{
    display: flex;
    align-items: center;
    gap: 9px;
}
.filters .chip{
    gap: 6px;
    height: 23px;
    padding: 0 6px;
    border: 1px solid #d0d0d0;
    border-radius: 3px;
    background: #f5f5f5;
}
.actions{
    display: flex;
    gap: 35px;
    margin-left: auto;
    color: #222;
}
.actions button{
    gap: 7px;
}
.actions svg{
    fill: #000;
}

/* toolbar */
.content{
    padding: 14px 20px 20px;
}
.toolbar{
    display: flex;
    gap: 12px;
    margin-bottom: 5px;
}
.btn{
    display: flex;
    align-items: center;
    gap: 9px;
    height: 34px;
    padding: 0 12px;
    border: 1px solid #d0d0d0;
    border-radius: 3px;
    background: #fff;
    box-shadow: 0 1px 1px #eee;
}
.select-all{
    gap: 11px;
    padding: 0 8px 0 11px;
}
.select-all button{
    gap: 3px;
}
.search{
    width: 164px;
    height: 34px;
    margin-left: auto;
    padding: 0 8px;
    border: 1px solid #d0d0d0;
    border-radius: 3px;
    outline: 0;
    appearance: none;
}
.search::placeholder{
    color: #666;
    opacity: 1;
}
.icon-only{
    padding: 0 16px;
}
.columns{
    gap: 6px;
    padding: 0 11px;
}
.box{
    display: block;
    width: 15px;
    height: 15px;
    border: 2px solid #8e8e8e;
    border-radius: 3px;
    background: #fff;
    appearance: none;
}
.box.dark{
    border-color: #444;
}
.box:checked{
    background: #fbc02d;
}

/* channels table */
.channels{
    width: 100%;
    table-layout: fixed;
    border-collapse: separate;
    border-spacing: 0;
}
.c-check{
    width: 47px;
}
.c-id{
    width: 43px;
}
.c-num{
    width: 62px;
}
.c-logo{
    width: 75px;
}
.c-name,
.c-genre{
    width: 144px;
}
.c-lang{
    width: 89px;
}
.c-url{
    width: 200px;
}
.c-archive{
    width: 94px;
}
.c-status{
    width: 194px;
}
.c-toggle{
    width: 87px;
}
th,
td{
    height: 34px;
    padding: 0;
    border-bottom: 1px solid #dfdfdf;
    text-align: left;
    white-space: nowrap;
}
th{
    border-color: #bdbdbd;
    font-size: 11px;
    color: #555;
}
th:first-child,
td:first-child{
    padding-left: 12px;
}
td a{
    color: #1d56c2;
}
td.url{
    padding-left: 19px;
}
td.muted{
    color: #555;
}
.archive{
    padding-left: 10px;
    color: #4a4a4a;
}
.archive svg{
    width: 20px;
    height: 20px;
    fill: currentColor;
}
.logo{
    width: 25px;
    height: 25px;
}
.selected td{
    background: #fff3d1;
}
.selected td:first-child{
    padding-left: 11px;
    border-left: 1px solid #f5dc94;
}
.selected td:last-child{
    border-right: 1px solid #f5c842;
}
.badge{
    display: inline-block;
    height: 21px;
    padding: 0 6px;
    border: 1px solid;
    border-radius: 2px;
    background: #fff;
    font-size: 11px;
    font-weight: bold;
    line-height: 18px;
    vertical-align: middle;
}
.none{
    color: #78909c;
}
.monitoring{
    color: #1798dd;
}
.error{
    color: #e57373;
}
.problems{
    color: #e98567;
}
.succeed{
    color: #3cb878;
}
.toggle{
    display: flex;
    align-items: center;
    width: 40px;
    height: 23px;
    padding: 0 2px;
    border-radius: 12px;
    background: #b7b7b7;
    appearance: none;
    cursor: pointer;
}
.toggle::after{
    content: "";
    width: 19px;
    height: 19px;
    border-radius: 50%;
    background: #fff;
}
.toggle:checked{
    justify-content: flex-end;
    background: #3cb878;
}
.selected .toggle::after{
    background: #fff3d1;
}

/* bottom */
.bottom{
    display: flex;
    align-items: center;
    margin-top: 16px;
    font-size: 13px;
}
.total{
    align-self: flex-start;
    line-height: 18px;
}
.rows{
    display: flex;
    align-items: center;
    gap: 10px;
    margin: 0 52px 0 auto;
}
.select{
    position: relative;
}
.select select{
    width: 61px;
    height: 36px;
    padding: 0 8px;
    border: 1px solid #d0d0d0;
    border-radius: 3px;
    background: #fff;
    font-weight: bold;
    appearance: none;
}
.select .caret{
    position: absolute;
    top: 16px;
    right: 11px;
    pointer-events: none;
}
.pager{
    display: flex;
    height: 36px;
    border: 1px solid #d0d0d0;
    border-radius: 3px;
    font-weight: bold;
    box-shadow: 0 1px 1px #eee;
}
.pager a,
.pager span{
    display: flex;
    align-items: center;
    justify-content: center;
    width: 34px;
}
.pager .active{
    width: 36px;
    background: #fbc02d;
}
.pager .prev{
    width: 82px;
    font-size: 12px;
    font-weight: normal;
    color: #8b8b8b;
}
.pager .next{
    width: 58px;
}

/* footer */
.footer{
    padding: 6px 48px 6px 0;
    border-top: 1px solid #dcdcdc;
    background: #f1f1f1;
    text-align: center;
}
.footer i{
    font-style: normal;
    color: #777;
}
```
